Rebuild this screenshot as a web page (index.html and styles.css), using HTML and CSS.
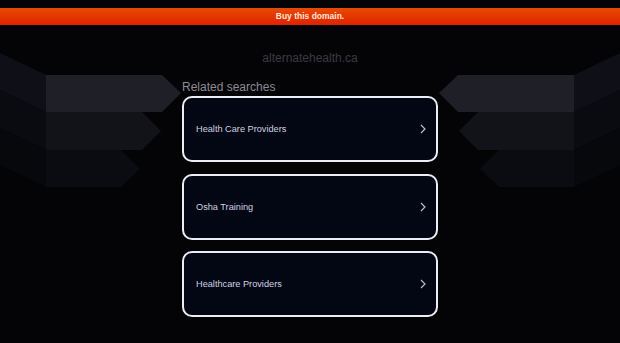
FILE: index.html
```
<!DOCTYPE html>
<html>
<head>
<meta charset="utf-8">
<link rel="stylesheet" href="styles.css">
</head>
<body>
<svg class="backdrop" width="620" height="343" viewBox="0 0 620 343" aria-hidden="true">
  <polygon points="0,53 46,75 46,112 0,90" fill="#0f1017"/>
  <polygon points="0,90 46,112 46,150 0,128" fill="#0a0b10"/>
  <polygon points="0,128 46,150 46,187 0,165" fill="#07080c"/>
  <polygon points="46,75 162,75 181,93 162,112 46,112" fill="#1e1f27"/>
  <polygon points="46,112 142,112 161,131 142,150 46,150" fill="#121319"/>
  <polygon points="46,150 121,150 140,169 121,187 46,187" fill="#0b0c11"/>
  <polygon points="620,53 574,75 574,112 620,90" fill="#0f1017"/>
  <polygon points="620,90 574,112 574,150 620,128" fill="#0a0b10"/>
  <polygon points="620,128 574,150 574,187 620,165" fill="#07080c"/>
  <polygon points="574,75 458,75 439,93 458,112 574,112" fill="#1e1f27"/>
  <polygon points="574,112 478,112 459,131 478,150 574,150" fill="#121319"/>
  <polygon points="574,150 499,150 480,169 499,187 574,187" fill="#0b0c11"/>
</svg>
<div class="page">
  <div class="buybar">Buy this domain.</div>
  <div class="domain">alternatehealth.ca</div>
  <main class="results">
    <div class="label">Related searches</div>
    <a class="card" href="#"><span>Health Care Providers</span><svg class="chev" width="6" height="10" viewBox="0 0 6 10"><path d="M1 1 L5 5 L1 9" fill="none" stroke="#b9bccb" stroke-width="1.2"/></svg></a>
    <a class="card" href="#"><span>Osha Training</span><svg class="chev" width="6" height="10" viewBox="0 0 6 10"><path d="M1 1 L5 5 L1 9" fill="none" stroke="#b9bccb" stroke-width="1.2"/></svg></a>
    <a class="card" href="#"><span>Healthcare Providers</span><svg class="chev" width="6" height="10" viewBox="0 0 6 10"><path d="M1 1 L5 5 L1 9" fill="none" stroke="#b9bccb" stroke-width="1.2"/></svg></a>
  </main>
</div>
</body>
</html>
```
FILE: styles.css
```
html, body {
  margin: 0;
  padding: 0;
  background: #040407;
  height: 100%;
  overflow: hidden;
  font-family: "Liberation Sans", Arial, sans-serif;
}
.backdrop {
  position: absolute;
  top: 0;
  left: 0;
  z-index: 0;
}
.page {
  position: relative;
  z-index: 1;
  padding-top: 8px;
  display: flex;
  flex-direction: column;
  align-items: center;
}
.buybar {
  align-self: stretch;
  height: 17px;
  line-height: 17px;
  background: linear-gradient(#e84a02, #df2200);
  color: #ffe6d8;
  font-size: 8.5px;
  font-weight: bold;
  text-align: center;
}
.domain {
  margin-top: 24px;
  height: 18px;
  line-height: 18px;
  font-size: 12px;
  color: #3a3a41;
}
.results {
  width: 256px;
  display: flex;
  flex-direction: column;
  gap: 11.5px;
}
.label {
  margin-top: 11px;
  margin-bottom: -11.5px;
  height: 18px;
  line-height: 18px;
  font-size: 12px;
  color: #8b8b92;
}
.card {
  box-sizing: border-box;
  height: 66px;
  border: 2px solid #eceef4;
  border-radius: 10px;
  background: #030613;
  display: flex;
  align-items: center;
  justify-content: space-between;
  padding: 0 10px 0 12px;
  text-decoration: none;
  color: #cfd2e2;
  font-size: 9.2px;
}
.chev {
  display: block;
}
```
